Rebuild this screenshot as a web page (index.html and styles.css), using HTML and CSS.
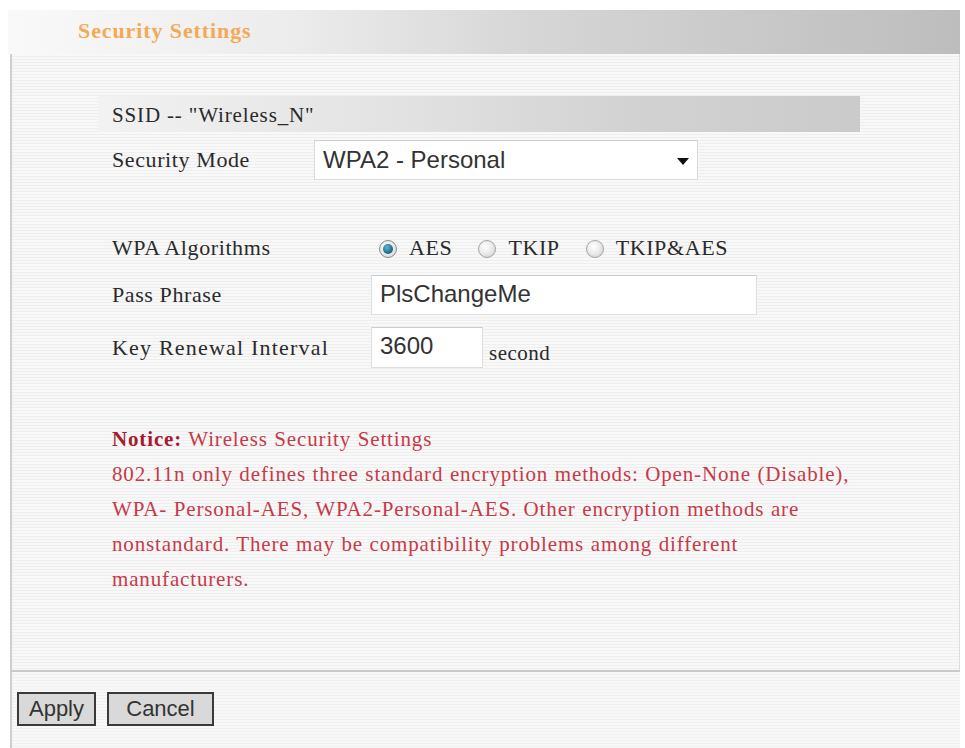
FILE: index.html
```html
<!DOCTYPE html>
<html>
<head>
<meta charset="utf-8">
<title>Security Settings</title>
<link rel="stylesheet" href="styles.css">
</head>
<body>
<div class="page">
  <div class="header"><span class="title">Security Settings</span></div>
  <div class="panel">
    <div class="ssid">SSID -- "Wireless_N"</div>
    <div class="mode-row">
      <span class="label mode-label">Security Mode</span>
      <div class="select">
        <span class="select-text">WPA2 - Personal</span>
        <svg class="arrow" width="12" height="7" viewBox="0 0 12 7"><path d="M0 0 L12 0 L6 7 Z" fill="#111"/></svg>
      </div>
    </div>
    <div class="wpa">
      <div class="row algo-row">
        <span class="label">WPA Algorithms</span>
        <div class="radios">
          <label class="opt"><span class="radio on"></span><span>AES</span></label>
          <label class="opt"><span class="radio"></span><span>TKIP</span></label>
          <label class="opt"><span class="radio"></span><span>TKIP&amp;AES</span></label>
        </div>
      </div>
      <div class="row pass-row">
        <span class="label">Pass Phrase</span>
        <div class="input wide">PlsChangeMe</div>
      </div>
      <div class="row key-row">
        <span class="label">Key Renewal Interval</span>
        <div class="input short">3600</div>
        <span class="unit">second</span>
      </div>
    </div>
    <div class="notice">
      <b>Notice:</b> Wireless Security Settings<br>
      802.11n only defines three standard encryption methods: Open-None (Disable),<br>
      WPA- Personal-AES, WPA2-Personal-AES. Other encryption methods are<br>
      nonstandard. There may be compatibility problems among different<br>
      manufacturers.
    </div>
  </div>
  <div class="footer">
    <button class="btn apply">Apply</button>
    <button class="btn cancel">Cancel</button>
  </div>
</div>
</body>
</html>
```
FILE: styles.css
```css
html, body {
  margin: 0;
  padding: 0;
  background: #ffffff;
}
body {
  font-family: "Liberation Serif", "Times New Roman", serif;
  color: #2a2a2a;
  width: 965px;
  height: 748px;
  overflow: hidden;
}
.page {
  margin-left: 8px;
  padding-top: 10px;
  width: 952px;
}
.header {
  height: 44px;
  box-sizing: border-box;
  padding-left: 70px;
  line-height: 42px;
  background: linear-gradient(to right, #f9f9f9 0%, #ececec 30%, #d6d6d6 55%, #c8c8c8 80%, #bdbdbd 100%);
}
.title {
  font-size: 22px;
  font-weight: bold;
  letter-spacing: 0.9px;
  color: #f4a955;
}
.panel {
  margin-left: 2px;
  border-left: 2px solid #cfcfcf;
  border-right: 1px solid #dcdcdc;
  border-bottom: 2px solid #c9c9c9;
  height: 618px;
  box-sizing: border-box;
  padding-top: 42px;
  background: repeating-linear-gradient(to bottom, #f8f8f8 0px, #f8f8f8 2px, #efefef 2px, #efefef 3px);
}
.ssid {
  margin-left: 86px;
  width: 762px;
  height: 36px;
  line-height: 38px;
  box-sizing: border-box;
  padding-left: 14px;
  font-size: 21px;
  letter-spacing: 0.85px;
  background: linear-gradient(to right, #f2f2f2 0%, #e2e2e2 40%, #d2d2d2 70%, #cbcbcb 100%);
}
.label {
  font-size: 22px;
  letter-spacing: 0.6px;
  color: #2a2a2a;
}
.mode-row {
  margin-top: 8px;
  margin-left: 100px;
  display: flex;
  align-items: center;
  height: 40px;
}
.mode-label {
  width: 202px;
}
.select {
  width: 384px;
  height: 40px;
  box-sizing: border-box;
  background: #ffffff;
  border: 1px solid #dadada;
  border-top-color: #cfcfcf;
  display: flex;
  align-items: center;
  justify-content: space-between;
  padding: 0 8px 0 8px;
}
.select-text, .input, .btn {
  font-family: "Liberation Sans", Arial, sans-serif;
}
.select-text {
  font-size: 24px;
  color: #333;
}
.arrow {
  margin-top: 2px;
}
.wpa {
  margin-left: 100px;
  margin-top: 45px;
  display: flex;
  flex-direction: column;
}
.row {
  display: flex;
  align-items: center;
}
.row .label {
  width: 259px;
  flex: none;
}
.key-row .label {
  letter-spacing: 1.2px;
}
.algo-row {
  height: 46px;
}
.pass-row {
  margin-top: 4px;
  height: 40px;
}
.key-row {
  margin-top: 12px;
  height: 41px;
}
.radios {
  display: flex;
  align-items: center;
  padding-left: 8px;
  gap: 26px;
  font-size: 22px;
  letter-spacing: 0.6px;
}
.opt {
  display: flex;
  align-items: center;
  gap: 12px;
}
.radio {
  width: 18px;
  height: 18px;
  border-radius: 50%;
  box-sizing: border-box;
  border: 1px solid #a4a4a4;
  background: radial-gradient(circle at 40% 35%, #ffffff 0%, #ececec 45%, #cccccc 100%);
  position: relative;
  margin-top: 2px;
}
.radio.on {
  border-color: #8a8a8a;
  background: radial-gradient(circle at 40% 35%, #fafafa 0%, #d8d8d8 100%);
}
.radio.on::after {
  content: "";
  position: absolute;
  left: 3px;
  top: 3px;
  width: 10px;
  height: 10px;
  border-radius: 50%;
  background: radial-gradient(circle at 40% 35%, #5fb6d6 0%, #1f6f8f 60%, #124a60 100%);
}
.input {
  height: 40px;
  box-sizing: border-box;
  background: #ffffff;
  border: 1px solid #dedede;
  border-top-color: #cccccc;
  font-size: 24px;
  color: #333;
  line-height: 36px;
  padding-left: 8px;
}
.input.wide {
  width: 386px;
}
.input.short {
  width: 112px;
  height: 41px;
}
.unit {
  font-size: 21px;
  letter-spacing: 0.5px;
  margin-left: 6px;
  margin-top: 12px;
}
.notice {
  margin-left: 100px;
  margin-top: 54px;
  font-size: 21px;
  letter-spacing: 0.85px;
  word-spacing: 0.5px;
  line-height: 35px;
  color: #c63a48;
  white-space: nowrap;
}
.notice b {
  color: #a51c2c;
}
.footer {
  margin-left: 2px;
  border-left: 2px solid #cfcfcf;
  height: 80px;
  box-sizing: border-box;
  padding-top: 20px;
  padding-left: 5px;
  display: flex;
  gap: 11px;
  align-items: flex-start;
  background: repeating-linear-gradient(to bottom, #f8f8f8 0px, #f8f8f8 2px, #f0f0f0 2px, #f0f0f0 3px);
}
.btn {
  height: 34px;
  box-sizing: border-box;
  border: 2px solid #3a3a3a;
  background: #d9d9d9;
  color: #333;
  font-size: 22px;
  padding: 0;
  line-height: 28px;
  border-radius: 0;
}
.btn.apply {
  width: 79px;
}
.btn.cancel {
  width: 107px;
}
```
